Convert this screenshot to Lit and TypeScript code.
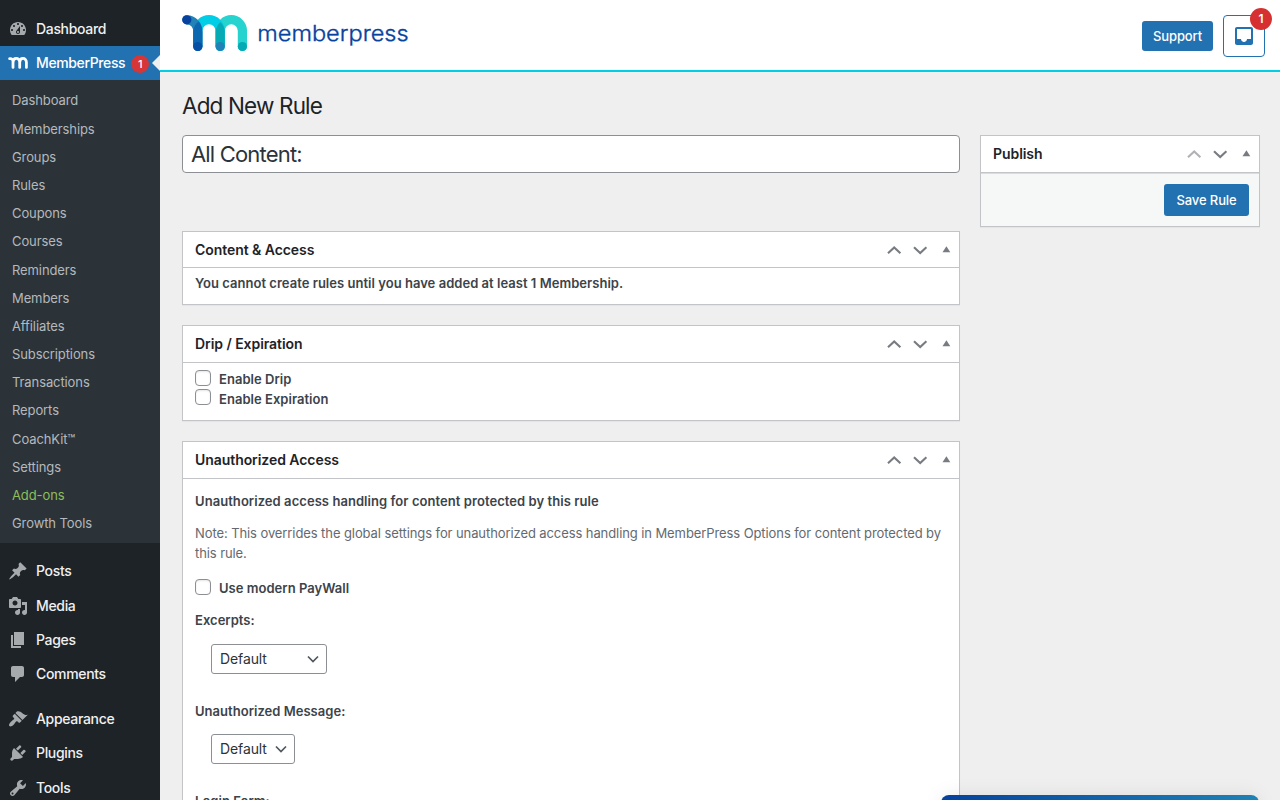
import { LitElement, html, css } from "lit";
import { customElement, property } from "lit/decorators.js";

const ICONS: Record<string, string> = {
  dashboard:
    "M3.76 16h12.48c1.1-1.37 1.76-3.11 1.76-5 0-4.42-3.58-8-8-8s-8 3.58-8 8c0 1.89.66 3.63 1.76 5zM10 4c.55 0 1 .45 1 1s-.45 1-1 1-1-.45-1-1 .45-1 1-1zM6 6c.55 0 1 .45 1 1s-.45 1-1 1-1-.45-1-1 .45-1 1-1zm8 0c.55 0 1 .45 1 1s-.45 1-1 1-1-.45-1-1 .45-1 1-1zm-5.37 5.55L12 7v6c0 1.1-.9 2-2 2s-2-.9-2-2c0-.57.24-1.08.63-1.45zM4 10c.55 0 1 .45 1 1s-.45 1-1 1-1-.45-1-1 .45-1 1-1zm12 0c.55 0 1 .45 1 1s-.45 1-1 1-1-.45-1-1 .45-1 1-1zm-5 3c0-.55-.45-1-1-1s-1 .45-1 1 .45 1 1 1 1-.45 1-1z",
  post: "M10.44 3.02l1.82-1.82 6.36 6.35-1.83 1.82c-1.05-.68-2.48-.57-3.41.36l-.75.75c-.92.93-1.04 2.35-.35 3.41l-1.83 1.82-2.41-2.41-2.8 2.79c-.42.42-3.38 2.71-3.8 2.29s1.86-3.39 2.28-3.81l2.79-2.79L4.1 9.36l1.83-1.82c1.05.69 2.48.57 3.4-.36l.75-.75c.93-.92 1.05-2.35.36-3.41z",
  media:
    "M13 11V4c0-.55-.45-1-1-1h-1.67L9 1H5L3.67 3H2c-.55 0-1 .45-1 1v7c0 .55.45 1 1 1h10c.55 0 1-.45 1-1zM7 4.5c1.38 0 2.5 1.12 2.5 2.5S8.38 9.5 7 9.5 4.5 8.38 4.5 7 5.62 4.5 7 4.5zM14 6h5v10.5c0 1.38-1.12 2.5-2.5 2.5S14 17.88 14 16.5s1.12-2.5 2.5-2.5c.17 0 .34.02.5.05V9h-3V6zm-4 8.05V13h2v3.5c0 1.38-1.12 2.5-2.5 2.5S7 17.88 7 16.5 8.12 14 9.5 14c.17 0 .34.02.5.05z",
  page: "M6 15V2h10v13H6zm-1 1h8v2H3V5h2v11z",
  comments:
    "M5 2h9c1.1 0 2 .9 2 2v7c0 1.1-.9 2-2 2h-2l-5 5v-5H5c-1.1 0-2-.9-2-2V4c0-1.1.9-2 2-2z",
  appearance:
    "M14.48 11.06L7.41 3.99l1.5-1.5c.5-.56 2.3-.47 3.51.32 1.21.8 1.43 1.28 2.91 2.1 1.18.64 2.45 1.26 4.45.85zm-.71.71L6.7 4.7 4.93 6.47c-.39.39-.39 1.02 0 1.41l1.06 1.06c.39.39.39 1.03 0 1.42-.6.6-1.43 1.11-2.21 1.69-.35.26-.7.53-1.01.84C1.43 14.23.4 16.08 1.4 17.07c.99 1 2.84-.03 4.18-1.36.31-.31.58-.66.85-1.02.57-.78 1.08-1.61 1.69-2.21.39-.39 1.02-.39 1.41 0l1.06 1.06c.39.39 1.02.39 1.41 0z",
  plugins:
    "M13.11 4.36L9.87 7.6 8 5.73l3.24-3.24c.35-.34 1.05-.2 1.56.32.52.51.66 1.21.31 1.55zm-8 1.77l.91-1.12 9.01 9.01-1.19.84c-.71.71-2.63 1.16-3.82 1.16H6.14L4.9 17.26c-.59.59-1.54.59-2.12 0-.59-.58-.59-1.53 0-2.12l1.24-1.24v-3.88c0-1.13.4-3.19 1.09-3.89zm7.26 3.97l3.24-3.24c.34-.35 1.04-.21 1.55.31.52.51.66 1.21.31 1.55l-3.24 3.25z",
  tools:
    "M16.68 9.77c-1.34 1.34-3.3 1.67-4.95.99l-5.41 6.52c-.99.99-2.59.99-3.58 0s-.99-2.59 0-3.57l6.52-5.42c-.68-1.65-.35-3.61.99-4.95 1.28-1.28 3.12-1.62 4.72-1.06l-2.89 2.89 2.82 2.82 2.86-2.87c.53 1.58.18 3.39-1.08 4.65zM3.81 16.21c.4.39 1.04.39 1.43 0 .4-.4.4-1.04 0-1.43-.39-.4-1.03-.4-1.43 0-.39.39-.39 1.03 0 1.43z",
};

const SUBMENU = [
  "Dashboard", "Memberships", "Groups", "Rules", "Coupons", "Courses",
  "Reminders", "Members", "Affiliates", "Subscriptions", "Transactions",
  "Reports", "CoachKit™", "Settings", "Add-ons", "Growth Tools",
];

@customElement("admin-menu")
class AdminMenu extends LitElement {
  static styles = css`
    :host {
      display: flex;
      flex-direction: column;
      width: 160px;
      height: 800px;
      flex: none;
      overflow: hidden;
      background: #1d2327;
      color: #f0f0f1;
      font-size: 14px;
      font-weight: 500;
      box-sizing: border-box;
      padding-top: 12px;
    }
    .item {
      display: flex;
      align-items: center;
      flex: none;
      height: 34.3px;
      padding-left: 8px;
      gap: 8px;
      letter-spacing: -0.33px;
    }
    .item svg { width: 20px; height: 20px; fill: #a7aaad; flex: none; }
    .item .text { margin-top: -1px; }
    .top { height: 34px; }
    .current {
      position: relative;
      height: 34px;
      background: #2271b1;
      color: #fff;
      letter-spacing: -0.38px;
    }
    .current::after {
      content: "";
      position: absolute;
      right: 0;
      top: 9px;
      border: 8px solid transparent;
      border-left-width: 0;
      border-right-color: #efefef;
    }
    .current svg { fill: none; stroke: #fff; }
    .count {
      width: 18px;
      height: 18px;
      border-radius: 9px;
      margin: 2px 0 0 -2px;
      background: #d63638;
      font-size: 11px;
      line-height: 18px;
      text-align: center;
    }
    .sub {
      flex: none;
      box-sizing: border-box;
      height: 463px;
      padding: 6.4px 12px 0;
      background: #2c3338;
      color: #b4b9be;
      font-size: 13px;
      font-weight: 400;
      letter-spacing: -0.1px;
      margin-bottom: 11.3px;
    }
    .sub div { height: 28.2px; line-height: 28.2px; white-space: nowrap; }
    .sub .addons { color: #8cbd5a; }
    .gap { height: 10.5px; flex: none; }
  `;
  item(icon: string, label: string, cls = "") {
    return html`<div class="item ${cls}">
      <svg viewBox="0 0 20 20"><path d=${ICONS[icon]} /></svg><span class="text">${label}</span>
    </div>`;
  }
  render() {
    return html`
      ${this.item("dashboard", "Dashboard", "top")}
      <div class="item current">
        <svg viewBox="0 0 20 20" stroke-width="2.8" stroke-linecap="round">
          <path d="M1.6 5.6C4.2 5.4 5 6.8 5 8.8V14.4M5 9.4C5 4.2 11.7 4.2 11.7 9.2V14.4M11.7 9.4C11.7 4.2 18.4 4.2 18.4 9.2V14.4" />
        </svg>
        <span class="text">MemberPress</span><span class="count">1</span>
      </div>
      <div class="sub">
        ${SUBMENU.map((s) => html`<div class=${s === "Add-ons" ? "addons" : ""}>${s}</div>`)}
      </div>
      ${this.item("post", "Posts")} ${this.item("media", "Media")}
      ${this.item("page", "Pages")} ${this.item("comments", "Comments")}
      <div class="gap"></div>
      ${this.item("appearance", "Appearance")} ${this.item("plugins", "Plugins")}
      ${this.item("tools", "Tools")}
    `;
  }
}

@customElement("meta-box")
class MetaBox extends LitElement {
  @property() heading = "";
  @property({ type: Boolean }) first = false;
  static styles = css`
    :host {
      display: block;
      box-sizing: border-box;
      background: #fff;
      border: 1px solid #c3c4c7;
      box-shadow: 0 1px 1px rgba(0, 0, 0, 0.04);
    }
    .head {
      display: flex;
      align-items: center;
      height: var(--head, 36px);
      border-bottom: 1px solid #c3c4c7;
      padding-left: 12px;
    }
    .title {
      flex: 1;
      margin-top: -1px;
      font-size: 14px;
      font-weight: 600;
      color: #1d2327;
      letter-spacing: -0.06px;
    }
    .head svg { width: 26px; height: 26px; flex: none; fill: none; stroke: #787c82; stroke-width: 2.1; }
    .head .dim { stroke: #b0b2b5; }
    .head .tri { fill: #787c82; stroke: none; }
  `;
  render() {
    return html`<div class="head">
        <span class="title">${this.heading}</span>
        <svg class=${this.first ? "dim" : ""} viewBox="0 0 26 26"><path d="M7 16.2L13.2 10.4L19.4 16.2" /></svg>
        <svg viewBox="0 0 26 26"><path d="M7 10.2L13.2 16L19.4 10.2" /></svg>
        <svg class="tri" viewBox="0 0 26 26"><path d="M9.5 15.2L13.4 9.2L17.3 15.2Z" /></svg>
      </div>
      <slot></slot>`;
  }
}

@customElement("app-root")
class AppRoot extends LitElement {
  static styles = css`
    :host {
      display: flex;
      position: relative;
      width: 1280px;
      height: 800px;
      overflow: hidden;
      background: #efefef;
      font-family: Inter, "Liberation Sans", sans-serif;
      font-size: 13px;
      color: #3c434a;
    }
    .main { flex: 1; min-width: 0; }
    .header {
      display: flex;
      align-items: center;
      box-sizing: border-box;
      height: 72px;
      background: #fff;
      border-bottom: 2px solid #00cee6;
      padding: 2px 15px 0 22px;
      gap: 10px;
    }
    .logo { display: block; width: 230px; height: 42px; margin-right: auto; overflow: visible; }
    .word { font-family: Inter, sans-serif; font-weight: 300; font-size: 22px; fill: #06429e; stroke: #06429e; stroke-width: 0.35px; }
    .btn {
      box-sizing: border-box;
      background: #2271b1;
      color: #fff;
      border-radius: 3px;
      font-size: 13px;
      font-weight: 500;
      text-align: center;
    }
    .support { width: 71px; height: 30px; line-height: 30px; letter-spacing: -0.1px; }
    .inbox {
      position: relative;
      box-sizing: border-box;
      width: 42px;
      height: 42px;
      border: 1px solid #2271b1;
      border-radius: 4px;
      padding: 8px;
    }
    .inbox svg { display: block; width: 24px; height: 24px; fill: #2271b1; }
    .badge {
      position: absolute;
      right: -8px;
      top: -8px;
      width: 22px;
      height: 22px;
      border-radius: 11px;
      background: #d63030;
      color: #fff;
      font-size: 12px;
      font-weight: 600;
      line-height: 22px;
      text-align: center;
    }
    h1 {
      margin: 0;
      padding: 20px 22px 0;
      height: 43px;
      line-height: 28px;
      font-size: 22.5px;
      font-weight: 400;
      color: #1d2327;
      letter-spacing: -0.85px;
    }
    .cols { display: grid; grid-template-columns: 778px 280px; gap: 20px; padding-left: 22px; align-items: start; }
    .left { display: grid; gap: 20px; }
    .name {
      box-sizing: border-box;
      height: 38px;
      border: 1px solid #8c8f94;
      border-radius: 4px;
      background: #fff;
      color: #2c3338;
      font-size: 22px;
      line-height: 36px;
      padding-left: 8px;
      letter-spacing: -0.82px;
      margin-bottom: 38px;
    }
    .access { height: 74px; --head: 35px; }
    .drip { height: 96px; }
    .unauth { height: 500px; }
    .body { padding: 0 12px; font-weight: 600; line-height: 20px; letter-spacing: 0.03px; }
    .access .body { padding-top: 5px; }
    .drip .body { padding-top: 7px; }
    .check { display: flex; gap: 8px; height: 19.4px; white-space: nowrap; }
    .lbl { margin-top: -0.9px; }
    .box {
      box-sizing: border-box;
      width: 16px;
      height: 16px;
      border: 1px solid #8c8f94;
      border-radius: 4px;
      background: #fff;
      box-shadow: inset 0 1px 2px rgba(0, 0, 0, 0.1);
    }
    .unauth .body { padding-top: 12px; }
    .lead { letter-spacing: 0.06px; }
    .note { margin: 12px 0 16px; font-weight: 400; color: #646970; letter-spacing: -0.09px; }
    .label { margin-top: 11.6px; }
    .select {
      display: flex;
      align-items: center;
      justify-content: space-between;
      box-sizing: border-box;
      width: 116px;
      height: 30px;
      margin: 14px 0 27px 16px;
      padding: 0 7px 0 8px;
      border: 1px solid #8c8f94;
      border-radius: 3px;
      font-size: 14px;
      font-weight: 400;
      color: #2c3338;
      letter-spacing: -0.1px;
    }
    .select svg { width: 12px; height: 8px; fill: none; stroke: #50575e; stroke-width: 1.7; }
    .small { width: 84px; margin-top: 13px; }
    .publish { height: 92px; }
    .actions {
      display: flex;
      justify-content: flex-end;
      box-sizing: border-box;
      height: 53px;
      padding: 10px 10px 0 0;
      background: #f6f7f7;
      border-top: 1px solid #dcdcde;
    }
    .save { width: 85px; height: 32px; line-height: 32px; letter-spacing: -0.1px; }
    .banner {
      position: absolute;
      left: 941px;
      top: 795px;
      width: 318px;
      height: 40px;
      border-radius: 8px;
      background: linear-gradient(90deg, #06429e, #1d82b5);
      box-shadow: 0 0 20px rgba(0, 0, 0, 0.08);
    }
  `;
  check(label: string) {
    return html`<div class="check"><span class="box"></span><span class="lbl">${label}</span></div>`;
  }
  select(cls = "") {
    return html`<div class="select ${cls}"><span>Default</span><svg viewBox="0 0 12 8"><path d="M1 1.5L6 6.5L11 1.5" /></svg></div>`;
  }
  render() {
    return html`
      <admin-menu></admin-menu>
      <div class="main">
        <div class="header">
          <svg class="logo" viewBox="0 0 230 42" fill="none" stroke-width="9.2" stroke-linecap="round">
            <path d="M38.2 31.5V15.8A11.1 11.1 0 0 1 60.4 15.8V31.5" stroke="#26d3cf" />
            <path d="M15.8 31.5V15.8A11.2 11.2 0 0 1 38.2 15.8V31.5" stroke="#00cee6" />
            <path d="M33.6 31.5V16C34 12.4 36 9.2 38.2 7C40.6 9.2 42.5 12.4 42.8 16V31.5Z" fill="#05aab5" />
            <path d="M4.8 4.8C11 4.8 15.8 9.5 15.8 17V31.5" stroke="#2082b6" />
            <path d="M11.2 31.5V17C11.2 13 13.4 9 16.6 6.6C19 9.4 20.4 12.8 20.4 17V31.5Z" fill="#0b67b0" />
            <circle cx="4.8" cy="4.8" r="4.6" fill="#06429e" />
            <circle cx="15.8" cy="31.5" r="4.6" fill="#0850a5" />
            <circle cx="38.2" cy="31.5" r="4.6" fill="#2082b6" />
            <circle cx="60.4" cy="31.5" r="4.6" fill="#05aab5" />
            <text class="word" x="75.2" y="25.7" textLength="151.5" lengthAdjust="spacingAndGlyphs">memberpress</text>
          </svg>
          <div class="btn support">Support</div>
          <div class="inbox">
            <svg viewBox="0 0 24 24"><path d="M19 3H4.99C3.88 3 3.01 3.89 3.01 5L3 19c0 1.1.88 2 1.99 2H19c1.1 0 2-.9 2-2V5c0-1.11-.9-2-2-2zm0 12h-4c0 1.66-1.35 3-3 3s-3-1.34-3-3H4.99V5H19v10z" /></svg>
            <span class="badge">1</span>
          </div>
        </div>
        <h1>Add New Rule</h1>
        <div class="cols">
          <div class="left">
            <div class="name">All Content:</div>
            <meta-box class="access" heading="Content &amp; Access">
              <div class="body">You cannot create rules until you have added at least 1 Membership.</div>
            </meta-box>
            <meta-box class="drip" heading="Drip / Expiration">
              <div class="body">${this.check("Enable Drip")}${this.check("Enable Expiration")}</div>
            </meta-box>
            <meta-box class="unauth" heading="Unauthorized Access">
              <div class="body">
                <div class="lead">Unauthorized access handling for content protected by this rule</div>
                <div class="note">Note: This overrides the global settings for unauthorized access handling in MemberPress Options for content protected by this rule.</div>
                ${this.check("Use modern PayWall")}
                <div class="label">Excerpts:</div>
                ${this.select()}
                <div class="label">Unauthorized Message:</div>
                ${this.select("small")}
                <div class="label">Login Form:</div>
              </div>
            </meta-box>
          </div>
          <meta-box class="publish" heading="Publish" first>
            <div class="actions"><div class="btn save">Save Rule</div></div>
          </meta-box>
        </div>
      </div>
      <div class="banner"></div>
    `;
  }
}
